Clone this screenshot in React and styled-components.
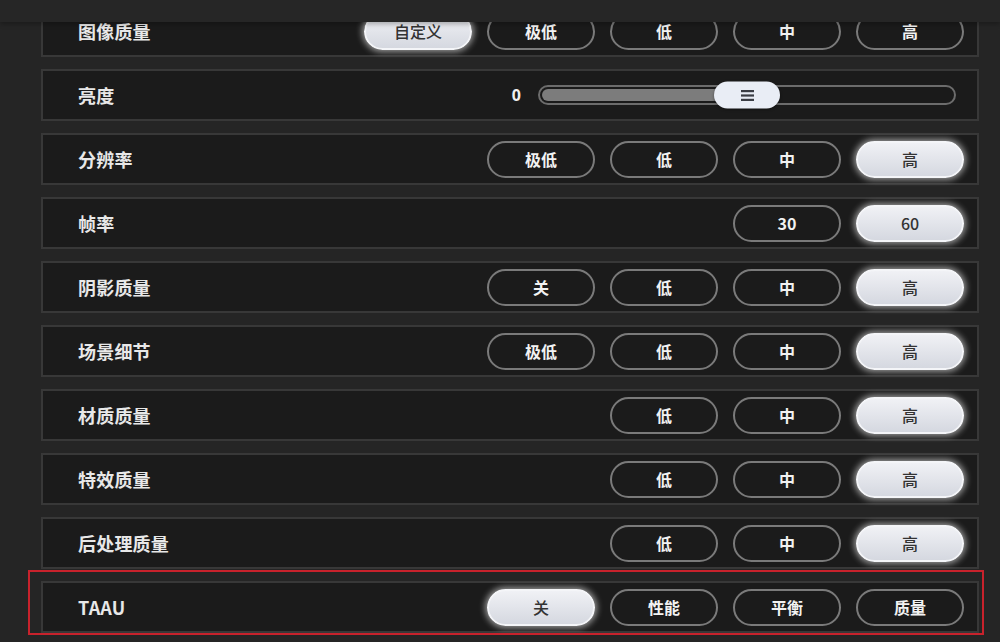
import React, { useEffect, useRef } from 'react';
import styled, { createGlobalStyle } from 'styled-components';

const GlobalStyle = createGlobalStyle`
  html, body {
    margin: 0;
    padding: 0;
    background: #252525;
  }
  * {
    box-sizing: border-box;
  }
`;

const Screen = styled.div`
  width: 1000px;
  height: 642px;
  display: flex;
  flex-direction: column;
  background: #252525;
  font-family: 'Noto Sans CJK SC', 'Noto Sans', sans-serif;
  overflow: hidden;
`;

const TopBar = styled.div`
  height: 22px;
  flex-shrink: 0;
  background: #262626;
  box-shadow: 0 2px 5px rgba(0, 0, 0, 0.3);
  position: relative;
  z-index: 2;
`;

const List = styled.div`
  flex: 1;
  overflow: hidden;
  display: flex;
  flex-direction: column;
  gap: 12px;
  padding: 0 21px 12px 41px;
`;

const RowWrap = styled.div`
  position: relative;
  flex-shrink: 0;
`;

const Row = styled.div`
  height: 52px;
  display: flex;
  align-items: center;
  padding: 0 13px 0 35px;
  background: #1b1b1b;
  border: 2px solid #383838;
`;

const Label = styled.div`
  flex: 1;
  color: #e8e8e8;
  font-size: 18px;
  font-weight: 700;
  letter-spacing: 0.2px;
`;

const Options = styled.div`
  display: flex;
  gap: 15px;
`;

const Option = styled.div`
  width: 108px;
  height: 37px;
  border-radius: 19px;
  display: flex;
  align-items: center;
  justify-content: center;
  font-size: 16px;
  border: 2px solid ${(p) => (p.active ? '#f4f5f8' : '#7a7a7a')};
  background: ${(p) => (p.active ? 'linear-gradient(#f0f1f5, #d5d8e0)' : 'transparent')};
  color: ${(p) => (p.active ? '#333333' : '#f2f2f2')};
  font-weight: ${(p) => (p.active ? 500 : 700)};
  box-shadow: ${(p) => (p.active ? '0 0 6px 2px rgba(255, 255, 255, 0.55)' : 'none')};
`;

const SliderGroup = styled.div`
  display: flex;
  align-items: center;
  gap: 17px;
  margin-right: 8px;
`;

const Value = styled.div`
  color: #f0f0f0;
  font-size: 16px;
  font-weight: 700;
  font-family: 'Noto Sans', sans-serif;
`;

const Track = styled.div`
  position: relative;
  width: 418px;
  height: 20px;
  border: 2px solid #6c6c6c;
  border-radius: 10px;
  background: #1a1a1a;
  padding: 2px;
`;

const Fill = styled.div`
  height: 100%;
  border-radius: 6px;
  background: #7c7c7c;
`;

const Thumb = styled.div`
  position: absolute;
  top: 50%;
  width: 66px;
  height: 27px;
  transform: translate(-50%, -50%);
  border-radius: 14px;
  background: #e9edf5;
  display: flex;
  align-items: center;
  justify-content: center;
  box-shadow: 0 1px 3px rgba(0, 0, 0, 0.4);
`;

const Highlight = styled.div`
  position: absolute;
  top: -11px;
  left: -13px;
  right: -5px;
  bottom: -2px;
  border: 2px solid #c8222c;
  pointer-events: none;
`;

const GripIcon = () => (
  <svg width="13" height="12" viewBox="0 0 13 12">
    <rect x="0" y="0.5" width="13" height="2.2" fill="#3a3d44" />
    <rect x="0" y="4.9" width="13" height="2.2" fill="#3a3d44" />
    <rect x="0" y="9.3" width="13" height="2.2" fill="#3a3d44" />
  </svg>
);

const rows = [
  { label: '图像质量', options: ['自定义', '极低', '低', '中', '高'], active: 0 },
  { label: '亮度', slider: { value: 0, min: -50, max: 50 } },
  { label: '分辨率', options: ['极低', '低', '中', '高'], active: 3 },
  { label: '帧率', options: ['30', '60'], active: 1 },
  { label: '阴影质量', options: ['关', '低', '中', '高'], active: 3 },
  { label: '场景细节', options: ['极低', '低', '中', '高'], active: 3 },
  { label: '材质质量', options: ['低', '中', '高'], active: 2 },
  { label: '特效质量', options: ['低', '中', '高'], active: 2 },
  { label: '后处理质量', options: ['低', '中', '高'], active: 2 },
  { label: 'TAAU', options: ['关', '性能', '平衡', '质量'], active: 0, marked: true },
];

const Slider = ({ value, min, max }) => {
  const pct = ((value - min) / (max - min)) * 100;
  return (
    <SliderGroup>
      <Value>{value}</Value>
      <Track>
        <Fill style={{ width: `${pct}%` }} />
        <Thumb style={{ left: `${pct}%` }}>
          <GripIcon />
        </Thumb>
      </Track>
    </SliderGroup>
  );
};

const App = () => {
  const listRef = useRef(null);

  useEffect(() => {
    // list is scrolled a little, first row sits under the top bar
    if (listRef.current) listRef.current.scrollTop = 17;
  }, []);

  return (
    <>
      <GlobalStyle />
      <Screen>
        <TopBar />
        <List ref={listRef}>
          {rows.map((row) => (
            <RowWrap key={row.label}>
              <Row>
                <Label>{row.label}</Label>
                {row.slider ? (
                  <Slider {...row.slider} />
                ) : (
                  <Options>
                    {row.options.map((opt, i) => (
                      <Option key={opt} active={i === row.active}>
                        {opt}
                      </Option>
                    ))}
                  </Options>
                )}
              </Row>
              {row.marked && <Highlight />}
            </RowWrap>
          ))}
        </List>
      </Screen>
    </>
  );
};

export default App;
